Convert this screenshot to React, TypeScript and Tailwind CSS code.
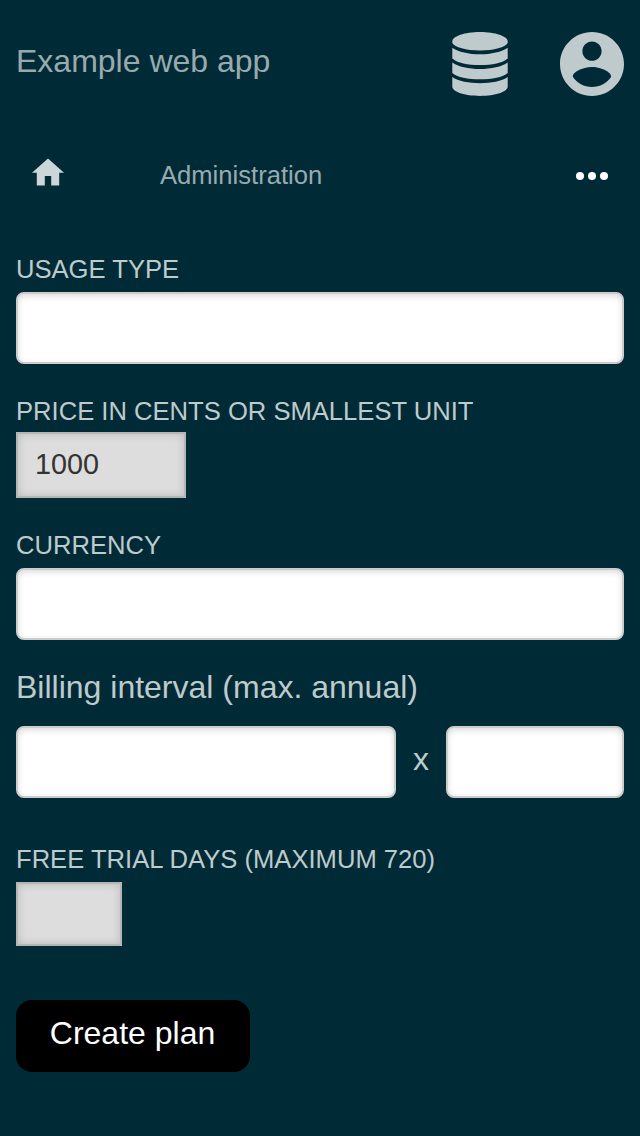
import React from "react";

const label = "block text-[25.6px] leading-8 text-[#bfcacd]";
const field =
  "h-[72px] rounded-[8px] border-2 border-[#cccccc] bg-white px-4 text-[28.8px] text-[#333] outline-none shadow-[inset_0_2px_6px_rgba(0,0,0,0.15)]";
const plain =
  "block rounded-none border-2 border-[#b5b5b5] bg-[#dddddd] pl-[17px] pb-[1px] text-[28.8px] text-[#333333] outline-none shadow-[inset_0_0_8px_rgba(0,0,0,0.16)]";

function DatabaseIcon() {
  return (
    <svg className="h-16 w-14 fill-[#bfcacd]" viewBox="0 0 56 64">
      <path d="M28 0C43.500 0 55.700 4.200 55.700 9.400V11C53.500 15.300 42 18.500 28 18.500S2.500 15.300 .3 11V9.400C.3 4.200 12.500 0 28 0Z" />
      <path d="M.3 15.700C6 19.900 17 22.300 28 22.300S50 19.900 55.700 15.700V26.400C51 30.800 40 33 28 33S5 30.800 .3 26.400Z" />
      <path d="M.3 30.400C6 34.600 17 36.900 28 36.900S50 34.600 55.700 30.400V41C51 45.400 40 47.300 28 47.300S5 45.400 .3 41Z" />
      <path d="M.3 45C6 49.200 17 51.200 28 51.200S50 49.200 55.700 45V54.600C55.700 59.800 43.500 64 28 64S.3 59.800 .3 54.600Z" />
    </svg>
  );
}

function AccountIcon() {
  return (
    <svg className="size-16 fill-[#bfcacd]" viewBox="2 2 20 20">
      <path d="M12 2C6.48 2 2 6.48 2 12s4.48 10 10 10 10-4.48 10-10S17.52 2 12 2zm0 3c1.66 0 3 1.34 3 3s-1.34 3-3 3-3-1.34-3-3 1.34-3 3-3zm0 14.2c-2.5 0-4.71-1.28-6-3.22.03-1.99 4-3.08 6-3.08 1.99 0 5.97 1.09 6 3.08-1.29 1.94-3.5 3.22-6 3.22z" />
    </svg>
  );
}

export default function App() {
  return (
    <div className="min-h-[1136px] w-full bg-[#002b36] px-4 font-['Liberation_Sans',Arial,sans-serif]">
      <header className="flex h-32 items-center justify-between">
        <h1 className="pb-[6px] text-[32px] leading-10 text-[#99aaaf]">Example web app</h1>
        <div className="flex gap-[52px]">
          <DatabaseIcon />
          <AccountIcon />
        </div>
      </header>

      <nav className="flex h-24 items-center px-4">
        <svg className="mb-[8px] h-[28px] w-8 fill-[#ccd5d7]" viewBox="2 3 20 17">
          <path d="M10 20v-6h4v6h5v-8h3L12 3 2 12h3v8z" />
        </svg>
        <span className="ml-24 pb-[2px] text-[25.6px] leading-8 text-[#99aaaf]">Administration</span>
        <div className="ml-auto flex gap-1">
          <span className="size-2 rounded-full bg-white" />
          <span className="size-2 rounded-full bg-white" />
          <span className="size-2 rounded-full bg-white" />
        </div>
      </nav>

      <form className="flex flex-col pt-[29px]" onSubmit={(e) => e.preventDefault()}>
        <label className={label} htmlFor="usage">USAGE TYPE</label>
        <input id="usage" className={`mt-[7px] w-full ${field}`} />

        <label className={`mt-[31px] ${label}`} htmlFor="price">PRICE IN CENTS OR SMALLEST UNIT</label>
        <input id="price" defaultValue="1000" className={`mt-[5px] h-[66px] w-[170px] ${plain}`} />

        <label className={`mt-[31px] ${label}`} htmlFor="currency">CURRENCY</label>
        <input id="currency" className={`mt-[7px] w-full ${field}`} />

        <h2 className="mt-[27px] text-[32px] leading-10 text-[#bfcacd]">Billing interval (max. annual)</h2>
        <div className="mt-[19px] flex items-center">
          <input aria-label="Interval unit" className={`w-[380px] ${field}`} />
          <span className="w-[50px] pb-[6px] text-center text-[32px] leading-10 text-[#bfcacd]">x</span>
          <input aria-label="Interval count" className={`w-[178px] ${field}`} />
        </div>

        <label className={`mt-[45px] ${label}`} htmlFor="trial">FREE TRIAL DAYS (MAXIMUM 720)</label>
        <input id="trial" className={`mt-[7px] h-16 w-[106px] ${plain}`} />

        <button className="mt-[54px] h-[72px] w-[234px] rounded-[16px] bg-black pb-[6px] pr-px text-[32px] leading-10 text-white">
          Create plan
        </button>
      </form>
    </div>
  );
}
